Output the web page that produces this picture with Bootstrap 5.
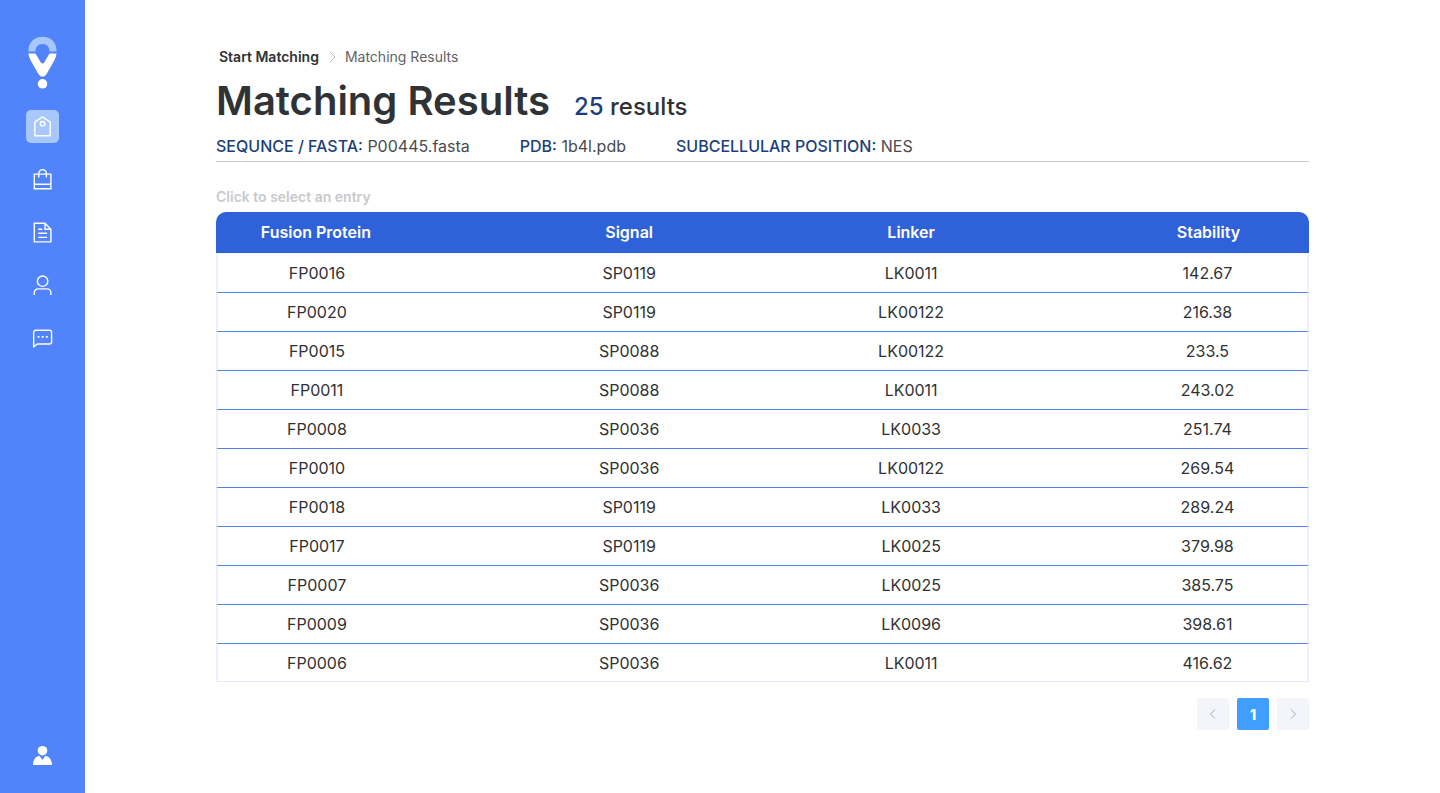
<!DOCTYPE html>
<html lang="en">
<head>
<meta charset="utf-8">
<meta name="viewport" content="width=device-width, initial-scale=1">
<title>Matching Results</title>
<link href="https://cdn.jsdelivr.net/npm/bootstrap@5.3.0/dist/css/bootstrap.min.css" rel="stylesheet">
<style>
body { font-family: Inter, "Liberation Sans", sans-serif; color: #303133; }
.side-bar { width: 85px; background: #5183fb; padding: 36px 0 24px; }
.side-nav { gap: 20px; margin-top: 20px; }
.side-item { width: 33px; height: 33px; border-radius: 5px; color: #fff; }
.side-item.active { background: #a8c8fb; }
.side-item svg { width: 21px; height: 21px; }
.page-main { padding: 46px 131px 0; }
.crumbs { font-size: 14px; line-height: 22px; padding-left: 3px; gap: 8px; }
.crumbs a { color: #303133; font-weight: 600; }
.crumbs .active { color: #606266; }
.page-title { font-size: 40px; line-height: 48px; font-weight: 600; color: #303336; margin-top: 9px; }
.title-text { font: inherit; }
.result-count { font-size: 24px; font-weight: 500; }
.navy { color: #1c3f7c; }
.query-info { font-size: 16px; line-height: 24px; margin-top: 3px; padding-bottom: 3px; column-gap: 50px; border-bottom: 1px solid #c8c9cc; color: #484b50; }
.query-info dt { font-weight: 500; }
.query-info dt, .query-info dd { display: inline; margin: 0; }
.hint { font-size: 14px; line-height: 20px; font-weight: 600; color: #c8c9cc; margin-top: 25px; margin-bottom: 5px; }
.result-table { table-layout: fixed; border-collapse: separate; border-spacing: 0; font-size: 16px; line-height: 24px; text-align: center; }
.result-table th { background: #2f62d9; color: #fff; font-weight: 600; padding: 8px 0 9px; }
.result-table th:first-child { border-top-left-radius: 10px; }
.result-table th:last-child { border-top-right-radius: 10px; }
.result-table tr > :first-child { padding-right: 128px; }
.result-table td { height: 39px; padding: 0; font-weight: 400; color: #303133; border-bottom: 1px solid #5183ee; cursor: pointer; }
.result-table tbody tr:first-child td { height: 40px; border-top: 1px solid #f3f6fd; }
.result-table tbody tr:last-child td { height: 38px; border-bottom-color: #e4e9f3; }
.result-table td:first-child { border-left: 2px solid #ecf1fe; }
.result-table td:last-child { border-right: 2px solid #ecf1fe; }
.c-fusion { width: 30%; }
.c-signal { width: 15.6%; }
.c-linker { width: 36%; }
.pager { gap: 8px; margin-top: 16px; }
.pager button { width: 32px; height: 32px; border: 0; border-radius: 2px; padding: 0; background: #f4f5fa; color: #a8abb2; font-size: 14px; font-weight: 800; }
.pager svg { display: block; margin: 0 auto; }
.pager button.active { background: #409eff; color: #fff; }
</style>
</head>
<body class="d-flex min-vh-100 bg-white">
<aside class="side-bar d-flex flex-column align-items-center flex-shrink-0">
  <a href="#" class="d-block lh-1" aria-label="Home">
    <svg class="d-block" width="29" height="54" viewBox="0 0 29 54" fill="none">
      <path d="M.4 15.500C.4 6.500 6 .8 14.500 .8S28.600 6.500 28.600 15.500H21.500C21.500 11 19 8 14.500 8S7.500 11 7.500 15.500Z" fill="#a8c8fb"/>
      <path d="M.4 17.500H7.500L12.800 26.500Q14.500 28.600 16.200 26.500L21.500 17.500H28.600Q28.300 20.500 26.300 24.500L18.300 38.500Q14.500 43 10.700 38.500L2.700 24.500Q.7 20.500.4 17.500Z" fill="#fff"/>
      <circle cx="14.500" cy="47.800" r="4.800" fill="#fff"/>
    </svg>
  </a>
  <nav class="side-nav d-flex flex-column" aria-label="Main">
    <a href="#" class="side-item active d-flex align-items-center justify-content-center" aria-label="Matching">
      <svg viewBox="0 0 21 21" fill="none" stroke="currentColor" stroke-width="1.400"><path d="M2.800 19.800V6.200L10.500.9l7.700 5.300v13.600z" stroke-linejoin="round"/><circle cx="10.500" cy="7.700" r="2.200"/></svg>
    </a>
    <a href="#" class="side-item d-flex align-items-center justify-content-center" aria-label="Storage">
      <svg viewBox="0 0 21 21" fill="none" stroke="currentColor" stroke-width="1.400"><path d="M2.300 5.100h16.600v14.600H2.300zM2.300 15.200h16.600M6.800 8.500V4.400a3.800 3.800 0 0 1 7.600 0v4.100"/></svg>
    </a>
    <a href="#" class="side-item d-flex align-items-center justify-content-center" aria-label="Documents">
      <svg viewBox="0 0 21 21" fill="none" stroke="currentColor" stroke-width="1.400"><path d="M13 1.300H2.300v18.600h16.600V7.200zM13 1.300v5.900h5.900M6.300 7.200h4M6.300 11.300h8.800M6.300 15.400h8.800"/></svg>
    </a>
    <a href="#" class="side-item d-flex align-items-center justify-content-center" aria-label="Profile">
      <svg viewBox="0 0 21 21" fill="none" stroke="currentColor" stroke-width="1.400"><circle cx="10.600" cy="6.200" r="5.200"/><path d="M2.300 19.900v-2.300a3.700 3.700 0 0 1 3.700-3.700h9.200a3.700 3.700 0 0 1 3.700 3.700v2.300"/></svg>
    </a>
    <a href="#" class="side-item d-flex align-items-center justify-content-center" aria-label="Messages">
      <svg viewBox="0 0 21 21" fill="none" stroke="currentColor" stroke-width="1.400"><path d="M1.700 19V4.300a2 2 0 0 1 2-2h13.900a2 2 0 0 1 2 2V14a2 2 0 0 1-2 2H5.200z" stroke-linejoin="round"/><path d="M5.600 8.900h1.900M9.700 8.900h1.900M13.800 8.900h1.900" stroke-width="1.900"/></svg>
    </a>
  </nav>
  <a href="#" class="mt-auto text-white" aria-label="Account">
    <svg class="d-block" width="21" height="24" viewBox="0 0 21 24" fill="currentColor"><circle cx="10.500" cy="5.700" r="4.800"/><path d="M1 20c0-5 2.200-8.300 6.500-9.200l2.900 4.200 2.900-4.200c4.300.9 6.700 4.200 6.700 9.200z"/></svg>
  </a>
</aside>
<main class="page-main flex-grow-1">
  <nav class="crumbs d-flex align-items-center" aria-label="Breadcrumb">
    <a href="#" class="text-decoration-none">Start Matching</a>
    <svg width="10" height="12" viewBox="0 0 10 12" fill="none" stroke="#b4b7bd"><path d="M3 1l5 5-5 5"/></svg>
    <span class="active" aria-current="page">Matching Results</span>
  </nav>
  <div class="page-title d-flex align-items-baseline gap-4">
    <h1 class="title-text m-0">Matching Results</h1>
    <span class="result-count"><span class="navy">25</span> results</span>
  </div>
  <dl class="query-info d-flex flex-wrap mb-0">
    <div><dt class="navy">SEQUNCE / FASTA:</dt> <dd>P00445.fasta</dd></div>
    <div><dt class="navy">PDB:</dt> <dd>1b4l.pdb</dd></div>
    <div><dt class="navy">SUBCELLULAR POSITION:</dt> <dd>NES</dd></div>
  </dl>
  <p class="hint">Click to select an entry</p>
  <table class="result-table w-100">
    <thead><tr><th class="c-fusion">Fusion Protein</th><th class="c-signal">Signal</th><th class="c-linker">Linker</th><th>Stability</th></tr></thead>
    <tbody>
      <tr><td>FP0016</td><td>SP0119</td><td>LK0011</td><td>142.67</td></tr>
      <tr><td>FP0020</td><td>SP0119</td><td>LK00122</td><td>216.38</td></tr>
      <tr><td>FP0015</td><td>SP0088</td><td>LK00122</td><td>233.5</td></tr>
      <tr><td>FP0011</td><td>SP0088</td><td>LK0011</td><td>243.02</td></tr>
      <tr><td>FP0008</td><td>SP0036</td><td>LK0033</td><td>251.74</td></tr>
      <tr><td>FP0010</td><td>SP0036</td><td>LK00122</td><td>269.54</td></tr>
      <tr><td>FP0018</td><td>SP0119</td><td>LK0033</td><td>289.24</td></tr>
      <tr><td>FP0017</td><td>SP0119</td><td>LK0025</td><td>379.98</td></tr>
      <tr><td>FP0007</td><td>SP0036</td><td>LK0025</td><td>385.75</td></tr>
      <tr><td>FP0009</td><td>SP0036</td><td>LK0096</td><td>398.61</td></tr>
      <tr><td>FP0006</td><td>SP0036</td><td>LK0011</td><td>416.62</td></tr>
    </tbody>
  </table>
  <nav class="pager d-flex justify-content-end" aria-label="Pages">
    <button type="button" aria-label="Previous page" disabled><svg width="12" height="12" viewBox="0 0 12 12" fill="none" stroke="currentColor"><path d="M8 1.500L3.500 6 8 10.500"/></svg></button>
    <button type="button" class="active">1</button>
    <button type="button" aria-label="Next page" disabled><svg width="12" height="12" viewBox="0 0 12 12" fill="none" stroke="currentColor"><path d="M4 1.500L8.500 6 4 10.500"/></svg></button>
  </nav>
</main>
<script src="https://cdn.jsdelivr.net/npm/bootstrap@5.3.0/dist/js/bootstrap.bundle.min.js"></script>
</body>
</html>
